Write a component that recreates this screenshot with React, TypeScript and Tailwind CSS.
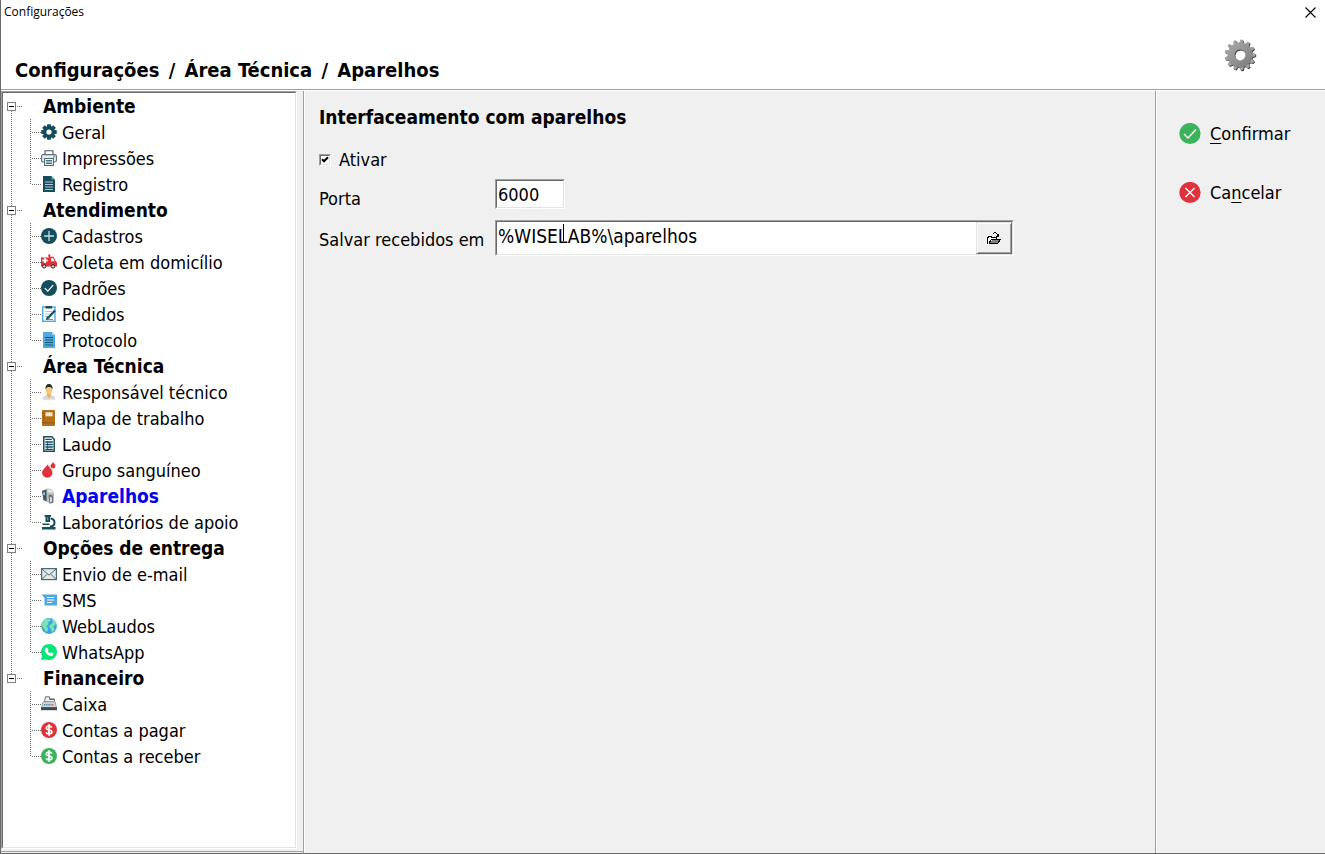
import { Fragment, useState } from "react";
import type { ReactNode } from "react";

const TEAL = "#124e5e";
const RED = "#e0323a";
const GREEN = "#3cb35a";
const BLUE = "#4fa8e0";

function Icon({ children }: { children: ReactNode }) {
  return (
    <svg viewBox="0 0 16 16" className="size-4 shrink-0" aria-hidden="true">
      {children}
    </svg>
  );
}

function Money({ color }: { color: string }) {
  return (
    <Icon>
      <circle cx="8" cy="8" r="8" fill={color} />
      <path
        d="M10.8 5.6C10.4 4.6 9.4 4.1 8 4.1c-1.600 0-2.700.7-2.700 1.900 0 2.800 5.600 1.200 5.600 4 0 1.200-1.200 1.900-2.800 1.900-1.600 0-2.700-.6-3-1.700M8 2.200v11.600"
        fill="none"
        stroke="#fff"
        strokeWidth="1.700"
      />
    </Icon>
  );
}

const icons: Record<string, ReactNode> = {
  geral: (
    <Icon>
      {[0, 45, 90, 135].map((a) => (
        <rect key={a} x="6" y="0.200" width="4" height="15.600" rx="0.800" fill={TEAL} transform={`rotate(${a} 8 8)`} />
      ))}
      <circle cx="8" cy="8" r="6" fill={TEAL} />
      <circle cx="8" cy="8" r="2.600" fill="#fff" />
    </Icon>
  ),
  impressoes: (
    <Icon>
      <path d="M4 5V.8h8V5" fill="#fff" stroke="#4b555c" strokeWidth="1.100" />
      <rect x="0.600" y="4.600" width="14.800" height="7.400" rx="1.500" fill="#eceff0" stroke="#5f6b73" strokeWidth="1.100" />
      <rect x="3.600" y="8.500" width="8.800" height="7" fill="#fff" stroke="#4b6a76" strokeWidth="1.100" />
      <path d="M5 10.500h6M5 12h6M5 13.500h6" stroke={TEAL} strokeWidth="0.800" />
      <path d="M12.200 6.800h1.600" stroke={TEAL} />
    </Icon>
  ),
  registro: (
    <Icon>
      <path d="M2 0h8.500L14 3.500V16H2z" fill={TEAL} />
      <path d="M10.500 0v3.500H14" fill="#7fa0aa" />
      <path d="M4 6h8M4 8.500h8M4 11h8M4 13.500h8" stroke="#c7d6da" strokeWidth="0.900" />
    </Icon>
  ),
  cadastros: (
    <Icon>
      <circle cx="8" cy="8" r="8" fill={TEAL} />
      <path d="M8 3v10M3 8h10" stroke="#cfdde0" strokeWidth="1.300" />
    </Icon>
  ),
  coleta: (
    <Icon>
      <path d="M0 3.500h8V2.800h4.500l2.200 4.200 1.300 1.500V12.500H0z" fill={RED} />
      <rect x="7.300" y="0.300" width="2" height="3" rx="0.800" fill={RED} />
      <path d="M10.200 4h1.800l1.700 3.200h-3.500z" fill="#fff" />
      <path d="M4 3.900v5.200M1.400 6.500h5.200" stroke="#fff" strokeWidth="1.800" />
      <circle cx="3.200" cy="12.400" r="1.700" fill="#dadada" stroke="#222" />
      <circle cx="12" cy="12.400" r="1.700" fill="#dadada" stroke="#222" />
    </Icon>
  ),
  padroes: (
    <Icon>
      <circle cx="8" cy="8" r="8" fill={TEAL} />
      <path d="M3.800 8.200l3 3 5.400-6" fill="none" stroke="#fff" strokeWidth="1.200" />
    </Icon>
  ),
  pedidos: (
    <Icon>
      <rect x="1.700" y="1" width="12.300" height="14.300" fill="#fff" stroke={BLUE} strokeWidth="1.400" />
      <path d="M4.500 0h6.500v2.500H4.500z" fill={TEAL} />
      <path d="M4 5.500h7M4 8h5M4 10.500h3" stroke="#9cc9e6" />
      <path d="M14 4.500L7.500 11.500" stroke={TEAL} strokeWidth="2.200" />
      <path d="M5 13.700l1.300-3.200 2 1.800zM5 13.500h7" fill={TEAL} stroke={TEAL} strokeWidth="0.600" />
    </Icon>
  ),
  protocolo: (
    <Icon>
      <path d="M2 0h9l3 3v13H2z" fill={BLUE} />
      <path d="M11 0v3h3" fill="#a8d6f3" />
      <path d="M4 5.500h8M4 8h8M4 10.500h8M4 13h8" stroke={TEAL} strokeWidth="0.900" />
    </Icon>
  ),
  responsavel: (
    <Icon>
      <path d="M1.500 15.800c0-3 1.500-4 4.500-4.500h4c3 .5 4.500 1.500 4.500 4.500z" fill="#d9d9d9" />
      <path d="M6 9h4v3l-2 2.200L6 12z" fill="#e3b45c" />
      <ellipse cx="8" cy="5.800" rx="3.300" ry="4.500" fill="#f3c978" />
      <path d="M4.500 5.500C4.200 2 5.500.1 8 .1s3.800 1.900 3.500 5.400C10.800 3.600 9.500 3 8 3s-2.800.6-3.500 2.500z" fill="#2c2a22" />
    </Icon>
  ),
  mapa: (
    <Icon>
      <rect x="1" y="0" width="13" height="16" rx="1" fill="#b56f18" />
      <path d="M3 .5v12" stroke="#9c5e12" strokeWidth="0.800" />
      <path d="M1 12.800h13" stroke="#8d5510" strokeWidth="0.800" />
      <rect x="4.500" y="2.300" width="7" height="4" fill="#f6e7d2" />
    </Icon>
  ),
  laudo: (
    <Icon>
      <path d="M2.800.8h8l2.400 2.400v12H2.800z" fill="#fff" stroke={TEAL} strokeWidth="1.500" />
      <path d="M4.300 3.300h6.500M4.300 6h7.500M4.300 8.500h7.500M4.300 11h7.500M4.300 13.300h7.500" stroke={TEAL} strokeWidth="1.300" />
      <path d="M6.500 5v9" stroke={TEAL} strokeWidth="0.700" />
    </Icon>
  ),
  sangue: (
    <Icon>
      <path d="M6.500 2.500c1.500 3 5 4.900 5 8.200a5.200 5 0 0 1-10.400 0c0-3.300 3.900-5.200 5.400-8.200z" fill={RED} />
      <path d="M12 0c.7 1.400 2.500 2.300 2.500 4a2.500 2.400 0 0 1-5 0c0-1.700 1.800-2.600 2.500-4z" fill={RED} />
    </Icon>
  ),
  aparelhos: (
    <Icon>
      <path d="M1 3L5.500.5l5 .5 2.500 4v9l-4 1.500L2.500 12z" fill="#b9bec2" />
      <path d="M1 3L5.500 1.500v12L2.500 12z" fill="#44525b" />
      <path d="M2 4.500l2-.5v3.200L2.200 7z" fill="#8cc4e4" />
      <path d="M6.500 1.500l4 .2 1.500 3-5.500-.4z" fill="#e9ebec" />
      <path d="M7.500 7c3-.6 4.500 0 4.500 2v6l-3.500.5z" fill="#6b747a" />
      <path d="M9 9c1.300-.3 2 0 2 .8v4L9 14.200z" fill="#d7dadc" />
    </Icon>
  ),
  laboratorios: (
    <Icon>
      <path d="M3.500 1h6.500v1.800H9V8H4.500V2.800h-1z" fill={TEAL} />
      <path d="M6 3.200h1.300v3H6z" fill="#6f939d" />
      <path d="M9.500 4.500c3 .3 4 2 4 4 0 2.300-1.700 4-4.500 4" fill="none" stroke={TEAL} strokeWidth="2" />
      <path d="M1.500 9.500h7V11h-7zM1 13h13.500v2.500H1z" fill={TEAL} />
    </Icon>
  ),
  email: (
    <Icon>
      <rect x="0.600" y="2.600" width="14.800" height="11" fill="#e3e8ea" stroke="#4b6a76" strokeWidth="1.200" />
      <path d="M1 3l7 6.200L15 3M1 13.300l5-5M15 13.300l-5-5" fill="none" stroke="#4b6a76" strokeWidth="1" />
    </Icon>
  ),
  sms: (
    <Icon>
      <path d="M.5 2.500H16v11H3.500V6z" fill={BLUE} />
      <path d="M6 5.500h7M6 8h7M6 10.500h5" stroke="#fff" strokeWidth="1.100" />
    </Icon>
  ),
  web: (
    <Icon>
      <circle cx="8" cy="8" r="7.900" fill="#3aa6dd" />
      <path d="M1.200 4.500C3 1.500 6 .3 8.500.5L9.500 3 7 4.500l.5 2L5 8l2 2-.5 3-1.500 1L3 10.500 1 8z" fill="#7be3b0" />
      <path d="M10.500 1l3.500 2 1.500 4-2-.5-1 2.500 1 2.500-2.500 3-1.500-4-1.500-2L10 6l2-1z" fill="#7be3b0" />
    </Icon>
  ),
  whatsapp: (
    <Icon>
      <circle cx="8" cy="8" r="8" fill="#06e578" />
      <path d="M0 16l1.500-6 4.500 5z" fill="#06e578" />
      <path d="M5.300 3.600l1.500.3.8 2-.9 1.200c.6 1.100 1.300 1.700 2.400 2.200l1.100-1 2 1 .1 1.500c-.8 1.200-2.300 1.500-4 .9C5.800 10.700 4.300 8.900 3.800 6.800c-.2-1.500.5-2.700 1.500-3.200z" fill="#fff" />
    </Icon>
  ),
  caixa: (
    <Icon>
      <path d="M3.500 5.500L4.500.8h4v2.700h5v3z" fill="#eef0f1" stroke="#5c666c" strokeWidth="0.900" />
      <path d="M9 3h4.500" stroke="#4a545a" />
      <path d="M2 5.800h12l1.500 5.700H.5z" fill="#d2d6d8" stroke="#7c868b" strokeWidth="0.700" />
      <path d="M3 8.700h7" stroke="#357fa8" strokeWidth="1.400" strokeDasharray="1.200 1" />
      <path d="M10.500 8.700H13" stroke={RED} strokeWidth="1.400" strokeDasharray="1.200 1" />
      <path d="M0 11.200h16v3H0z" fill="#3f4a50" />
    </Icon>
  ),
  pagar: <Money color={RED} />,
  receber: <Money color={GREEN} />,
};

const sections = [
  { title: "Ambiente", items: [["geral", "Geral"], ["impressoes", "Impressões"], ["registro", "Registro"]] },
  {
    title: "Atendimento",
    items: [
      ["cadastros", "Cadastros"],
      ["coleta", "Coleta em domicílio"],
      ["padroes", "Padrões"],
      ["pedidos", "Pedidos"],
      ["protocolo", "Protocolo"],
    ],
  },
  {
    title: "Área Técnica",
    items: [
      ["responsavel", "Responsável técnico"],
      ["mapa", "Mapa de trabalho"],
      ["laudo", "Laudo"],
      ["sangue", "Grupo sanguíneo"],
      ["aparelhos", "Aparelhos"],
      ["laboratorios", "Laboratórios de apoio"],
    ],
  },
  {
    title: "Opções de entrega",
    items: [["email", "Envio de e-mail"], ["sms", "SMS"], ["web", "WebLaudos"], ["whatsapp", "WhatsApp"]],
  },
  { title: "Financeiro", items: [["caixa", "Caixa"], ["pagar", "Contas a pagar"], ["receber", "Contas a receber"]] },
];

const sunken = "border border-t-[#a0a0a0] border-l-[#a0a0a0] border-r-white border-b-white";
const sunkenInner = "border border-t-[#696969] border-l-[#696969] border-r-[#e3e3e3] border-b-[#e3e3e3]";
const dotsDown = "w-px bg-[repeating-linear-gradient(to_bottom,#707070_0_1px,transparent_1px_2px)]";
const dotsAcross = "h-px bg-[repeating-linear-gradient(to_right,#707070_0_1px,transparent_1px_2px)]";

function Tree() {
  const [closed, setClosed] = useState<Record<string, boolean>>({});
  const [selected, setSelected] = useState("aparelhos");
  return (
    <nav aria-label="Seções" className={`flex w-[296px] flex-1 ${sunken}`}>
      <div className={`flex-1 bg-white ${sunkenInner}`}>
        {sections.map((section, s) => {
          const first = s === 0;
          const last = s === sections.length - 1;
          return (
            <Fragment key={section.title}>
              <button
                type="button"
                aria-expanded={!closed[section.title]}
                onClick={() => setClosed({ ...closed, [section.title]: !closed[section.title] })}
                className="flex h-[26px] w-full text-left"
              >
                <span className="ml-1 flex w-[9px] flex-col items-center">
                  <span className={first ? "h-[9px]" : `h-[9px] ${dotsDown}`} />
                  <span className="flex size-[9px] items-center justify-center border border-[#808080]">
                    <span className="h-px w-[5px] bg-black" />
                  </span>
                  {!last && <span className={`flex-1 ${dotsDown}`} />}
                </span>
                <span className={`mt-[13px] mr-5 ml-px w-[6px] ${dotsAcross}`} />
                <span className="text-[19px] leading-[26px] font-bold">{section.title}</span>
              </button>
              {!closed[section.title] &&
                section.items.map(([id, label], i) => (
                  <button
                    type="button"
                    key={id}
                    onClick={() => setSelected(id)}
                    className="flex h-[26px] w-full items-center pl-2 text-left"
                  >
                    <span className="flex h-full w-[19px]">{!last && <span className={dotsDown} />}</span>
                    <span className="flex h-full w-[11px]">
                      <span className={i < section.items.length - 1 ? dotsDown : `h-[14px] ${dotsDown}`} />
                      <span className={`mt-[13px] ml-px flex-1 ${dotsAcross}`} />
                    </span>
                    {icons[id]}
                    <span
                      className={
                        selected === id
                          ? "ml-[5px] text-[19px] leading-[26px] font-bold text-[#0000f0]"
                          : "ml-[5px] pt-0.5 text-[18px] leading-6"
                      }
                    >
                      {label}
                    </span>
                  </button>
                ))}
            </Fragment>
          );
        })}
      </div>
    </nav>
  );
}

function HeaderGear() {
  const teeth = Array.from({ length: 13 }, (_, i) => (i * 360) / 13 + 6);
  const body = (
    <>
      {teeth.map((a) => (
        <path key={a} d="M13.800 4.500L15 .6h2.400l1.200 3.900z" transform={`rotate(${a} 16 16)`} />
      ))}
      <path fillRule="evenodd" d="M16 3.600a12.400 12.400 0 1 0 0 24.800a12.400 12.400 0 1 0 0-24.800zM16 10.600a5.400 5.400 0 1 1 0 10.800a5.400 5.400 0 1 1 0-10.800z" />
    </>
  );
  return (
    <svg viewBox="0 0 33 33" className="size-[33px]" aria-hidden="true">
      <defs>
        <linearGradient id="steel" gradientUnits="userSpaceOnUse" x1="4" y1="2" x2="28" y2="30">
          <stop offset="0" stopColor="#aaaaaa" />
          <stop offset="0.500" stopColor="#929292" />
          <stop offset="1" stopColor="#7a7a7a" />
        </linearGradient>
      </defs>
      <g fill="#3d3d3d" transform="translate(0.800 0.800)">{body}</g>
      <g fill="url(#steel)">{body}</g>
    </svg>
  );
}

export default function App() {
  const [active, setActive] = useState(true);
  const [port, setPort] = useState("6000");
  const [path, setPath] = useState("%WISELAB%\\aparelhos");
  return (
    <div className="flex min-h-screen flex-col border-b border-l border-[#696969] bg-[#f0f0f0] font-['DejaVu_Sans_Condensed',Tahoma,sans-serif] text-[18px] text-black">
      <header className="border-b border-[#a0a0a0] bg-white">
        <div className="flex h-6 items-center justify-between pr-2 pl-[3px]">
          <span className="font-['Open_Sans',sans-serif] text-[12px] leading-6">Configurações</span>
          <button type="button" aria-label="Fechar" className="p-px">
            <svg viewBox="0 0 11 11" className="size-[11px]" aria-hidden="true">
              <path d="M.5.5l10 10M10.500.5l-10 10" stroke="#000" strokeWidth="1.100" />
            </svg>
          </button>
        </div>
        <div className="flex h-[65px] items-start justify-between pt-[15px] pr-[68px] pl-[14px]">
          <h1 className="pt-[17px] text-[20px] leading-7 font-bold">
            Configurações <span className="mx-[3px]">/</span> Área Técnica <span className="mx-[3px]">/</span> Aparelhos
          </h1>
          <HeaderGear />
        </div>
      </header>
      <div className="flex flex-1 border-t border-white">
        <aside className="mb-px flex flex-col border-b border-[#a0a0a0] pr-[6px]">
          <Tree />
          <div className="h-[2px]" />
        </aside>
        <main className="flex-1 border-l border-[#a0a0a0]">
          <div className="h-full border-l border-white pt-3 pl-[14px]">
            <h2 className="text-[19px] leading-7 font-bold">Interfaceamento com aparelhos</h2>
            <label className="mt-[15px] flex w-fit items-center gap-2 leading-7">
              <span className={`grid size-3 ${sunken}`}>
                <input
                  type="checkbox"
                  checked={active}
                  onChange={(e) => setActive(e.target.checked)}
                  className={`col-start-1 row-start-1 size-[10px] appearance-none bg-white ${sunkenInner}`}
                />
                {active && (
                  <svg viewBox="0 0 10 10" className="pointer-events-none col-start-1 row-start-1 size-[10px]" aria-hidden="true">
                    <path d="M2 4.300l2 2 4-4" fill="none" stroke="#000" strokeWidth="2" />
                  </svg>
                )}
              </span>
              Ativar
            </label>
            <div className="mt-[5px] flex items-start">
              <label htmlFor="port" className="w-[176px] shrink-0 pt-[6px] leading-7">
                Porta
              </label>
              <div className={sunken}>
                <input
                  id="port"
                  value={port}
                  onChange={(e) => setPort(e.target.value)}
                  className={`block h-7 w-[68px] bg-white px-px outline-none ${sunkenInner}`}
                />
              </div>
            </div>
            <div className="mt-[7px] flex items-start pr-4">
              <label htmlFor="path" className="w-[176px] shrink-0 pt-[6px] leading-7">
                Salvar recebidos em
              </label>
              <div className={`max-w-[519px] flex-1 ${sunken}`}>
                <div className={`relative flex h-[34px] bg-white ${sunkenInner}`}>
                  <input
                    id="path"
                    value={path}
                    onChange={(e) => setPath(e.target.value)}
                    className="h-7 min-w-0 flex-1 bg-transparent px-px text-[19px] outline-none"
                  />
                  <span className="absolute top-0.5 left-[66px] h-[17px] w-px bg-black" />
                  <button
                    type="button"
                    aria-label="Escolher pasta"
                    className="flex w-9 items-center justify-center border border-t-[#e3e3e3] border-r-[#696969] border-b-[#696969] border-l-[#e3e3e3] bg-[#f0f0f0] shadow-[inset_1px_1px_0_#fff,inset_-1px_-1px_0_#a0a0a0]"
                  >
                    <svg viewBox="0 0 14 13" className="h-[13px] w-[14px]" shapeRendering="crispEdges" aria-hidden="true">
                      <path d="M1 11V5h3l1 1h4v2H5l-3 4z" fill="#fff" />
                      <path d="M2 11l3-3h8l-3 3z" fill="#808080" />
                      <path d="M.5 11.500v-6h1v-1h3v1h5v2M1.500 11.500h9l3-4h-9l-3 4" fill="none" stroke="#000" />
                      <path d="M6 1.500h1M7 .5h2M9 1.500h1M10 2.500h1M9 4.500h3M10 3.500h2M11.500 2v2" stroke="#000" fill="none" />
                    </svg>
                  </button>
                </div>
              </div>
            </div>
          </div>
        </main>
        <section aria-label="Ações" className="w-[170px] border-l border-[#a0a0a0]">
          <div className="flex h-full flex-col items-start gap-[31px] border-l border-white pt-[29px] pl-[22px]">
            <button type="button" className="flex items-center gap-[9px] leading-7">
              <svg viewBox="0 0 22 22" className="size-[22px]" aria-hidden="true">
                <circle cx="11" cy="10.500" r="10.600" fill={GREEN} />
                <path d="M5 11l4 4 8-8.500" fill="none" stroke="#fff" strokeWidth="1.400" />
              </svg>
              <span>
                <span className="underline decoration-1 underline-offset-3">C</span>onfirmar
              </span>
            </button>
            <button type="button" className="flex items-center gap-[9px] leading-7">
              <svg viewBox="0 0 22 22" className="size-[22px]" aria-hidden="true">
                <circle cx="11" cy="10.500" r="10.600" fill={RED} />
                <path d="M6.500 6l9 9M15.500 6l-9 9" stroke="#fff" strokeWidth="1.400" />
              </svg>
              <span>
                Ca<span className="underline decoration-1 underline-offset-3">n</span>celar
              </span>
            </button>
          </div>
        </section>
      </div>
    </div>
  );
}
